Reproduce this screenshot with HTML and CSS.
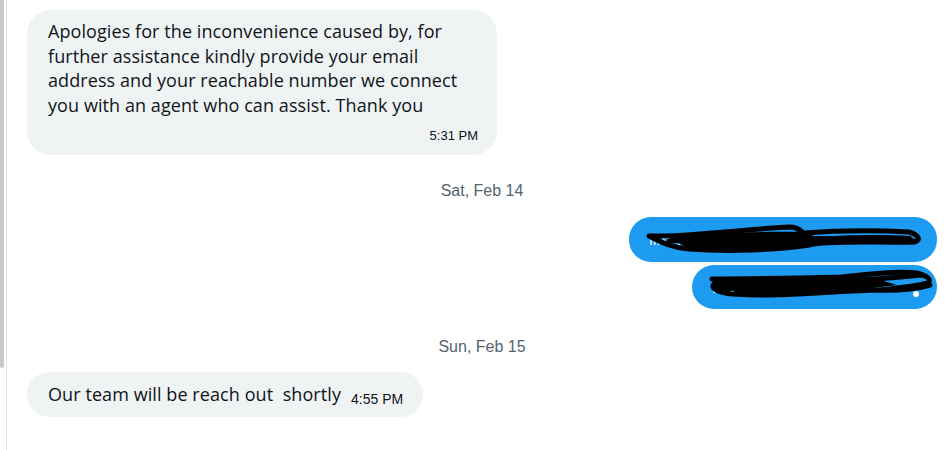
FILE: index.html
```html
<!DOCTYPE html>
<html lang="en">
<head>
<meta charset="utf-8">
<title>Conversation</title>
<link rel="stylesheet" href="styles.css">
</head>
<body>
<div class="app">
  <div class="scrollbar"><div class="thumb"></div></div>
  <main class="chat">
    <div class="row in">
      <div class="bubble gray tall">
        <p class="msg">Apologies for the inconvenience caused by, for further assistance kindly provide your email address and your reachable number we connect you with an agent who can assist. Thank you</p>
        <div class="time right">5:31 PM</div>
      </div>
    </div>

    <div class="date first">Sat, Feb 14</div>

    <div class="row out">
      <div class="bubble blue b1">
        <span class="hidden-text">link redacted</span>
        <svg class="scribble" viewBox="0 0 308 45" width="308" height="45" aria-hidden="true">
          <path d="M20 19 C60 20 90 14 160 10 C170 10 172 14 174 16 C200 14 230 12 280 15 C290 18 292 23 286 25 C250 26 200 23 180 28 C150 33 100 35 60 32 C40 30 30 24 20 19 Z M40 24 C90 20 140 20 200 22 C230 23 260 21 285 24 M60 31 C100 24 150 19 180 16" fill="none" stroke="#000" stroke-width="5" stroke-linecap="round" stroke-linejoin="round"/>
          <path d="M40 22 C80 16 130 14 175 15 L200 25 C160 30 110 33 60 31 Z" fill="#000"/>
          <path d="M180 20 C220 18 250 17 282 19 L284 24 C250 25 215 26 185 27 Z" fill="#000"/>
        </svg>
      </div>
      <div class="bubble blue b2">
        <span class="hidden-text">number redacted</span>
        <svg class="scribble" viewBox="0 0 245 44" width="245" height="44" aria-hidden="true">
          <path d="M20 14 C60 14 110 13 150 12 C180 9 200 6 225 8 C235 11 240 14 236 18 C215 23 180 26 160 26 C120 28 80 32 40 29 C25 27 18 23 22 19 C40 18 80 20 120 18 C160 16 200 13 230 10 M25 24 C70 21 130 22 180 25 C205 26 225 24 238 20" fill="none" stroke="#000" stroke-width="5" stroke-linecap="round" stroke-linejoin="round"/>
          <path d="M28 15 C80 13 130 12 175 11 L205 20 C150 27 90 32 45 29 Z" fill="#000"/>
          <circle cx="224" cy="29" r="3" fill="#fff"/>
        </svg>
      </div>
    </div>

    <div class="date second">Sun, Feb 15</div>

    <div class="row in">
      <div class="bubble gray short">
        <span class="msg">Our team will be reach out &nbsp;shortly</span>
        <span class="time inline">4:55 PM</span>
      </div>
    </div>
  </main>
</div>
</body>
</html>
```
FILE: styles.css
```css
* { box-sizing: border-box; }
html, body { margin: 0; padding: 0; background: #fff; }
body {
  width: 947px;
  height: 450px;
  overflow: hidden;
  font-family: "Open Sans", "Noto Sans", sans-serif;
  color: #0f1419;
}
.app {
  display: flex;
  height: 450px;
}
.scrollbar {
  flex: none;
  width: 7px;
  border-right: 1px solid #e1e6ea;
}
.thumb {
  width: 4px;
  height: 368px;
  background: #c4c9d0;
  border-radius: 0 0 2px 2px;
}
.chat {
  flex: 1;
  display: flex;
  flex-direction: column;
  padding: 10px 10px 0 20px;
}
.row { display: flex; }
.row.in { justify-content: flex-start; }
.row.out { flex-direction: column; align-items: flex-end; gap: 3px; }
.bubble { border-radius: 24px; }
.gray { background: #eff3f4; }
.tall {
  width: 470px;
  height: 145px;
  padding: 9px 19px 11px 21px;
}
.msg {
  margin: 0;
  font-size: 18px;
  line-height: 24.5px;
  letter-spacing: 0.08px;
}
.time {
  font-family: "Liberation Sans", Arial, sans-serif;
  font-size: 13px;
  color: #0f1419;
}
.time.right { text-align: right; margin-top: 11px; line-height: 16px; }
.date {
  font-family: "Liberation Sans", Arial, sans-serif;
  font-size: 16px;
  color: #536471;
  text-align: center;
  line-height: 20px;
}
.date.first { margin-top: 26px; margin-bottom: 16px; }
.date.second { margin-top: 28px; margin-bottom: 15px; }
.blue {
  background: #1d9bf0;
  position: relative;
  border-radius: 22px;
  overflow: hidden;
}
.b1 { width: 308px; height: 45px; }
.b2 { width: 245px; height: 44px; }
.hidden-text {
  position: absolute;
  left: 20px;
  top: 12px;
  color: #fff;
  font-size: 15px;
  white-space: nowrap;
}
.scribble { position: absolute; left: 0; top: 0; }
.short {
  display: flex;
  align-items: baseline;
  gap: 10px;
  height: 45px;
  padding: 10px 20px 0 21px;
}
.time.inline { position: relative; top: 3px; font-size: 14px; }
```
